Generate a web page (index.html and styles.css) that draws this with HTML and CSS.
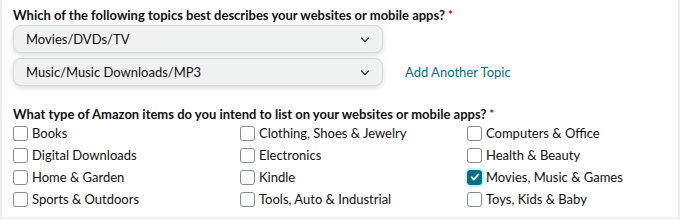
FILE: index.html
```
<!DOCTYPE html>
<html lang="en">
<head>
    <meta charset="UTF-8">
    <title>Topics</title>
    <link rel="stylesheet" href="styles.css">
</head>
<body>
    <div class="panel">
        <div class="field">
            <div class="label">Which of the following topics best describes your websites or mobile apps? <span class="req">*</span></div>
            <div class="select-row">
                <div class="select">Movies/DVDs/TV<span class="caret"></span></div>
            </div>
            <div class="select-row">
                <div class="select">Music/Music Downloads/MP3<span class="caret"></span></div>
                <a class="add-link" href="#">Add Another Topic</a>
            </div>
        </div>

        <div class="field">
            <div class="label">What type of Amazon items do you intend to list on your websites or mobile apps? <span class="req">*</span></div>
            <div class="check-grid">
                <label class="check"><span class="box"></span>Books</label>
                <label class="check"><span class="box"></span>Clothing, Shoes &amp; Jewelry</label>
                <label class="check"><span class="box"></span>Computers &amp; Office</label>
                <label class="check"><span class="box"></span>Digital Downloads</label>
                <label class="check"><span class="box"></span>Electronics</label>
                <label class="check"><span class="box"></span>Health &amp; Beauty</label>
                <label class="check"><span class="box"></span>Home &amp; Garden</label>
                <label class="check"><span class="box"></span>Kindle</label>
                <label class="check"><span class="box checked"><svg viewBox="0 0 12 12" width="10" height="10"><path d="M2 6.3 L4.8 9 L10 3" fill="none" stroke="#fff" stroke-width="2.2" stroke-linecap="round" stroke-linejoin="round"/></svg></span>Movies, Music &amp; Games</label>
                <label class="check"><span class="box"></span>Sports &amp; Outdoors</label>
                <label class="check"><span class="box"></span>Tools, Auto &amp; Industrial</label>
                <label class="check"><span class="box"></span>Toys, Kids &amp; Baby</label>
            </div>
        </div>
    </div>
</body>
</html>
```

FILE: styles.css
```
body {
    margin: 0;
    font-family: Lato, "Open Sans", Arial, sans-serif;
    font-size: 13px;
    color: #0f1111;
    background: #fff;
}

.panel {
    width: 680px;
    height: 219px;
    border: 2px solid #eeeeee;
    border-top: none;
    padding: 6px 0 0 11px;
    box-sizing: border-box;
}

.label {
    font-weight: 700;
    line-height: 18px;
}

.req {
    color: #c40000;
    font-size: 11px;
    vertical-align: top;
}

.select-row {
    display: flex;
    align-items: center;
    margin-top: 1px;
}

.select-row + .select-row {
    margin-top: 5px;
}

.select {
    width: 370px;
    height: 28px;
    box-sizing: border-box;
    display: flex;
    align-items: center;
    justify-content: space-between;
    padding: 0 12px;
    background: #f0f2f2;
    border: 1px solid #d5d9d9;
    border-radius: 8px;
    box-shadow: 0 2px 5px rgba(15, 17, 17, 0.15);
}

.caret {
    width: 5px;
    height: 5px;
    border-right: 1.6px solid #0f1111;
    border-bottom: 1.6px solid #0f1111;
    transform: rotate(45deg);
    margin: -3px 2px 0 0;
}

.add-link {
    margin-left: 22px;
    color: #007185;
    text-decoration: none;
}

.field + .field {
    margin-top: 19px;
}

.check-grid {
    display: grid;
    grid-template-columns: 227px 227px 200px;
    row-gap: 4px;
    margin-top: 1px;
}

.check {
    display: flex;
    align-items: center;
    height: 18px;
}

.box {
    width: 13px;
    height: 13px;
    border: 1px solid #888c8c;
    border-radius: 3px;
    margin-right: 4px;
    display: flex;
    align-items: center;
    justify-content: center;
    box-sizing: content-box;
}

.box.checked {
    background: #007185;
    border-color: #007185;
    box-shadow: 0 0 0 2px #c8f3fa;
}
```
